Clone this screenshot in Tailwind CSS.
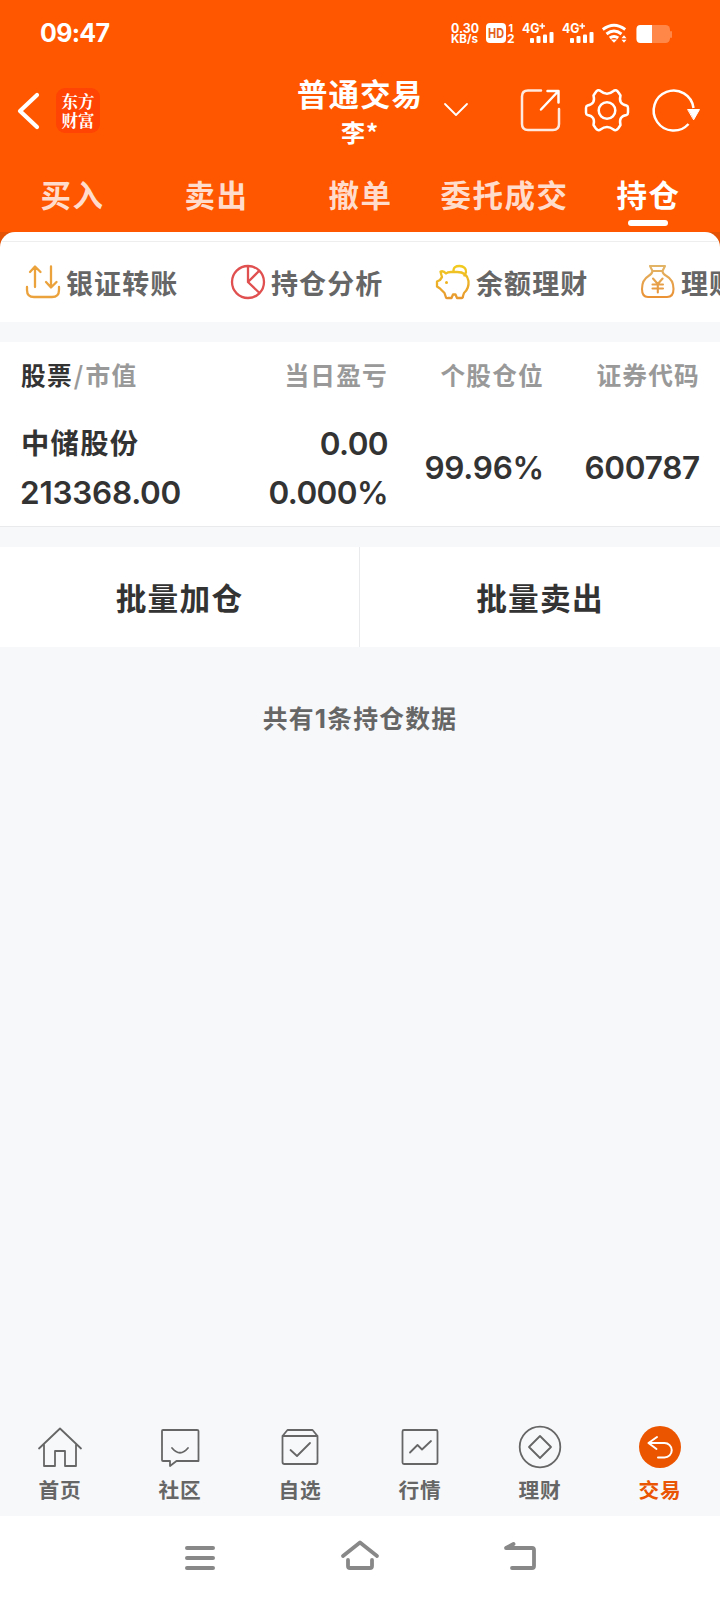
<!DOCTYPE html>
<html lang="zh-CN">
<head>
<meta charset="utf-8">
<title>持仓</title>
<script src="https://cdn.jsdelivr.net/npm/@tailwindcss/browser@4"></script>
</head>
<body class="w-[720px] h-[1600px] overflow-hidden flex flex-col bg-[#f7f8fa] font-['Noto_Sans_CJK_SC',sans-serif] font-bold text-[#333]">

<header class="h-[232px] shrink-0 bg-[#ff5700] text-white flex flex-col">
  <div class="h-[66px] flex items-center justify-between">
    <div class="pl-[40px] pt-px font-['Inter',sans-serif] font-bold text-[25px] leading-[65px] tracking-[-0.7px]">09:47</div>
    <svg class="w-[280px] h-[66px]" viewBox="440 0 280 66" fill="#fff" font-family="Inter, sans-serif" font-weight="700">
      <text x="451" y="32.500" font-size="12.500" textLength="28" lengthAdjust="spacingAndGlyphs">0.30</text>
      <text x="451" y="42.800" font-size="11.500" textLength="27" lengthAdjust="spacingAndGlyphs">KB/s</text>
      <rect x="486" y="23" width="20" height="20" rx="4"/>
      <text x="488" y="37.800" font-size="13.500" fill="#e2601c" textLength="16" lengthAdjust="spacingAndGlyphs">HD</text>
      <text x="508.500" y="31.500" font-size="10.500">1</text>
      <text x="507" y="43" font-size="12">2</text>
      <text x="522" y="32.500" font-size="13.500" textLength="17.500" lengthAdjust="spacingAndGlyphs">4G</text>
      <path d="M539.500 26h5.500M542.250 23.250v5.500" stroke="#fff" stroke-width="1.700"/>
      <g id="bars"><rect x="530" y="38" width="4" height="5" rx="1"/><rect x="536.500" y="36" width="4" height="7" rx="1"/><rect x="543" y="34.500" width="4" height="8.500" rx="1"/><rect x="549.500" y="32" width="4" height="11" rx="1"/></g>
      <text x="562" y="32.500" font-size="13.500" textLength="17.500" lengthAdjust="spacingAndGlyphs">4G</text>
      <path d="M579.500 26h5.500M582.250 23.250v5.500" stroke="#fff" stroke-width="1.700"/>
      <use href="#bars" x="40"/>
      <g fill="none" stroke="#fff" stroke-width="2.900"><path d="M602.800 29.500q11.200-8.500 22.400 0M606.500 34q7.500-6 15 0M609.800 38q4.200-3.200 8.400 0"/></g>
      <path d="M610.800 39.500h6.400l-3.200 3.300zM621.500 38.200l2.500-3 2.500 3zM621.500 39.700l2.500 3 2.500-3z"/>
      <rect x="636.500" y="25" width="33.500" height="18" rx="4.500" fill="#ff8748"/><rect x="670" y="31" width="2" height="7" rx="1" fill="#ff8748"/>
      <path d="M652 25v18h-11.500a4 4 0 0 1-4-4v-10a4 4 0 0 1 4-4z"/>
    </svg>
  </div>
  <div class="h-[90px] grid grid-cols-[280px_160px_280px]">
    <div class="flex items-center pl-[16px]">
      <svg class="w-[26px] h-[40px]" viewBox="16 91 26 40" fill="none" stroke="#fff" stroke-width="4.200" stroke-linecap="round" stroke-linejoin="round"><path d="M37 95 20 111l17 16"/></svg>
      <div class="ml-[14px] -mt-px w-[44px] h-[45px] rounded-[9px] bg-[#ff4403] flex flex-col items-center justify-center text-[16.500px] leading-[19px] font-bold font-['Noto_Serif_CJK_SC','Noto_Sans_CJK_SC',serif]"><span>东方</span><span>财富</span></div>
    </div>
    <div class="flex flex-col items-center pt-[5px] whitespace-nowrap">
      <div class="text-[30.500px] leading-[44px] tracking-[1px]">普通交易</div>
      <div class="text-[24px] leading-[34px] tracking-[1px]">李*</div>
    </div>
    <svg class="w-[280px] h-[90px]" viewBox="440 66 280 90" fill="none" stroke="#fff" stroke-width="2.500" stroke-linecap="round" stroke-linejoin="round">
      <path d="m445 104 11 11 11-11" stroke-width="1.800"/>
      <path stroke="#ffe9de" d="M541 90.500h-13q-6 0-6 6V124q0 6 6 6h25q6 0 6-6v-15"/>
      <path d="M547.500 91H558.500v11.500M557.500 92 541 109.500"/>
      <path d="M595.500 92.500C597 90 599 89.500 600.500 91C604.500 94.500 609.500 94.500 613.500 91C615 89.500 617 90 618.500 92.500L620.500 95.500C619 101.500 621 104.500 626.500 105.500Q628 106 628 108V112.500Q628 114.500 626.500 115C621 116 619 119 620.500 125L618.500 128Q616 131.500 613.500 129.500C609.500 126.500 604.500 126.500 600.500 129.500Q598 131.500 595.500 128L593.500 125C595 119 593 116 587.500 115Q586 114.500 586 112.500V108Q586 106 587.500 105.500C593 104.500 595 101.500 593.500 95.500Z"/>
      <circle cx="607" cy="110.500" r="8.300"/>
      <path d="M688.500 124A20 20 0 1 1 693.500 108" stroke-linecap="butt"/>
      <path d="M688 109.500h11.500l-5.700 10z" fill="#fff" stroke-width="1"/>
    </svg>
  </div>
  <nav class="h-[76px] grid grid-cols-5 text-center text-[30.500px] tracking-[1.500px] leading-[76px] text-[#ffdccb] whitespace-nowrap">
    <span class="pl-px">买入</span><span class="pl-px">卖出</span><span class="pl-px">撤单</span><span class="pl-px">委托成交</span>
    <span class="relative pl-px text-white">持仓<i class="absolute left-[52px] bottom-[6px] w-[40px] h-[6px] rounded-[3px] bg-white"></i></span>
  </nav>
</header>

<div class="h-[90px] shrink-0 bg-[linear-gradient(#e35205_50%,#fff_50%)]">
  <section class="h-full bg-white rounded-t-[15px] flex flex-col overflow-hidden">
    <div class="h-[10px] shrink-0 border-b border-[#eee]"></div>
    <div class="grid grid-cols-[repeat(4,205px)] h-[80px] pl-[25px] text-[27px] tracking-[1.100px] text-[#666] whitespace-nowrap">
      <div class="flex items-center gap-[5px]">
        <svg class="w-[36px] h-[36px]" viewBox="25 264 36 36" fill="none" stroke="#eba23c" stroke-width="2.300" stroke-linecap="round" stroke-linejoin="round"><path d="M35 287v-20m-5 5 5-5.500 5.500 5.500M51 266.500v20.500m-5-5 5 5.500 5.500-5.500M27 287v3q0 7 7 7h18q7 0 7-7v-3"/></svg><span class="leading-[79px] pt-px">银证转账</span></div>
      <div class="flex items-center gap-[5px]">
        <svg class="w-[36px] h-[36px]" viewBox="230 264 36 36" fill="none" stroke="#e05050" stroke-width="2.300"><circle cx="248" cy="282" r="16"/><path d="M248 266v16l11.500 11M248 282l11-11"/></svg><span class="leading-[79px] pt-px">持仓分析</span></div>
      <div class="flex items-center gap-[5px]">
        <svg class="w-[36px] h-[36px]" viewBox="435 264 36 36" fill="none" stroke="url(#gold)" stroke-width="2.300" stroke-linejoin="round"><defs><linearGradient id="gold" x1="0" y1="0" x2="0" y2="1"><stop stop-color="#f2cb20"/><stop offset="1" stop-color="#e7992f"/></linearGradient></defs><path d="M446 273.500C444 271 442 271 440.500 271.500C441 274 441.500 275.500 442 277L440 280L437 281.500V286.500L440 288.500L444.500 293L446 297.500Q446.500 298.500 448 298H451.500L453 294.500H455.500L457 298H461.500Q463 298 463 296L464 293C468 289.500 469 286 468.500 281C467.500 275 463 272 457 272H451Q447.500 272 446 273.500ZM453.500 272C453 267 456 266 459.500 266C464 266 466.500 269 466 272Q465.500 275 463.500 276"/><circle cx="446.500" cy="282.500" r="1.500" fill="#efb31f" stroke="none"/></svg><span class="leading-[79px] pt-px">余额理财</span></div>
      <div class="flex items-center gap-[5px]">
        <svg class="w-[36px] h-[36px]" viewBox="640 264 36 36" fill="none" stroke="url(#amber)" stroke-width="2.100" stroke-linejoin="round" stroke-linecap="round"><defs><linearGradient id="amber" gradientUnits="userSpaceOnUse" x1="0" y1="265" x2="0" y2="299"><stop stop-color="#e2b567"/><stop offset="1" stop-color="#ea9032"/></linearGradient></defs><path d="M650 266h15l-2.500 5H652.500zM652.500 271q-.500 3-4 5C643.500 279 642 284 642 289Q642 297 648 297h19Q673.500 297 673.500 289C673.500 284 672 279 666.500 276q-4-2-4-5M653 278.500l4.800 5.500 4.800-5.500M652.500 284.500h10.500M652.500 288.500h10.500M657.800 284v8.500"/></svg><span class="leading-[79px] pt-px">理财</span></div>
    </div>
  </section>
</div>

<section class="mt-[20px] h-[185px] shrink-0 bg-white border-b border-[#e9eaec] pl-[20px] pr-[19px]">
  <div class="grid grid-cols-[191px_177px_156px_156px] h-[66px] text-[24.700px] tracking-[1.200px] leading-[64px] text-[#999] text-right whitespace-nowrap">
    <div class="text-left pl-px"><span class="text-[#333]">股票</span><span class="px-px">/</span>市值</div><div>当日盈亏</div><div>个股仓位</div><div>证券代码</div>
  </div>
  <div class="grid grid-cols-[191px_177px_156px_156px] items-center h-[118px] pt-px text-[31.500px] font-semibold font-['Inter','Noto_Sans_CJK_SC',sans-serif] tracking-[-0.250px] text-right whitespace-nowrap">
    <div class="text-left"><div class="font-['Noto_Sans_CJK_SC',sans-serif] font-bold tracking-[1.300px] text-[28.300px] pl-px leading-[46px] pb-[3px]">中储股份</div><div class="leading-[49px]">213368.00</div></div>
    <div class="tracking-[-0.600px]"><div class="leading-[49px]">0.00</div><div class="leading-[49px]">0.000%</div></div>
    <div>99.96%</div><div>600787</div>
  </div>
</section>

<section class="mt-[20px] h-[100px] shrink-0 bg-white grid grid-cols-2 text-center text-[30.700px] tracking-[1.200px] leading-[99px]">
  <div class="border-r border-[#e9eaec]">批量加仓</div><div>批量卖出</div>
</section>

<p class="pt-[50px] text-center text-[24.800px] tracking-[1.200px] leading-[40px] text-[#666]">共有<span class="font-['Inter',sans-serif] text-[26px]">1</span>条持仓数据</p>

<nav class="mt-auto h-[98px] shrink-0 grid grid-cols-6 text-center text-[20.700px] tracking-[0.800px] leading-[34px] text-[#666]">
  <div class="flex flex-col items-center"><svg class="w-[48px] h-[54px]" viewBox="36 1418 48 54" fill="none" stroke="#666" stroke-width="1.800" stroke-linejoin="round" stroke-linecap="round"><path d="m39 1448.500 21-20 21 20M44 1444.500v21.500h11v-15h10v15h11v-21.500"/></svg><span>首页</span></div>
  <div class="flex flex-col items-center"><svg class="w-[48px] h-[54px]" viewBox="156 1418 48 54" fill="none" stroke="#666" stroke-width="1.800" stroke-linejoin="round" stroke-linecap="round"><path d="M163 1430h34q1.500 0 1.500 1v30h-22l-6.500 5v-5H163q-1 0-1-1v-29q0-1 1-1zM172 1448q8 9.500 16 0"/></svg><span>社区</span></div>
  <div class="flex flex-col items-center"><svg class="w-[48px] h-[54px]" viewBox="276 1418 48 54" fill="none" stroke="#666" stroke-width="1.800" stroke-linejoin="round" stroke-linecap="round"><path d="M282.500 1436v26q0 2 2 2h31q2 0 2-2v-26l-5-6h-25zM282.500 1436h35M290.500 1450l6.500 6 13-13"/></svg><span>自选</span></div>
  <div class="flex flex-col items-center"><svg class="w-[48px] h-[54px]" viewBox="396 1418 48 54" fill="none" stroke="#666" stroke-width="1.800" stroke-linejoin="round" stroke-linecap="round"><rect x="402.500" y="1430" width="35" height="34" rx="1.500"/><path d="m410 1452.500 7.500-7.500 4.500 4.500 9-8.500"/></svg><span>行情</span></div>
  <div class="flex flex-col items-center"><svg class="w-[48px] h-[54px]" viewBox="516 1418 48 54" fill="none" stroke="#666" stroke-width="1.800" stroke-linejoin="round"><circle cx="540" cy="1447" r="20.300"/><path d="m540 1436 11 11-11 11-11-11z"/></svg><span>理财</span></div>
  <div class="flex flex-col items-center text-[#e95504]"><svg class="w-[48px] h-[54px]" viewBox="636 1418 48 54" fill="none" stroke="#fff" stroke-width="2" stroke-linejoin="round" stroke-linecap="round"><circle cx="660" cy="1447" r="21" fill="#ec5500" stroke="none"/><path d="m657 1437-8.500 6 8 6M648.500 1443H664.500a7.200 7.200 0 0 1 0 14.500H658"/></svg><span>交易</span></div>
</nav>

<div class="h-[84px] shrink-0 bg-white grid grid-cols-[120px_160px_160px_160px_120px] items-center justify-items-center">
  <svg class="col-start-2 w-[40px] h-[40px]" viewBox="180 1538 40 40" stroke="#888" stroke-width="4" stroke-linecap="round"><path d="M187 1548h26M187 1558h26M187 1568h26"/></svg>
  <svg class="w-[40px] h-[40px]" viewBox="340 1538 40 40" fill="none" stroke="#888" stroke-width="3.800" stroke-linecap="round" stroke-linejoin="round"><path d="m343 1556 17-13.500 17 13.500M348 1560v6q0 2 2 2h20q2 0 2-2v-6"/></svg>
  <svg class="w-[40px] h-[40px]" viewBox="500 1538 40 40" fill="none" stroke="#888" stroke-width="3.800" stroke-linecap="round" stroke-linejoin="round"><path d="M512 1568h20q2 0 2-2v-16q0-2-2-2h-26l7.500-4"/></svg>
</div>
</body>
</html>
